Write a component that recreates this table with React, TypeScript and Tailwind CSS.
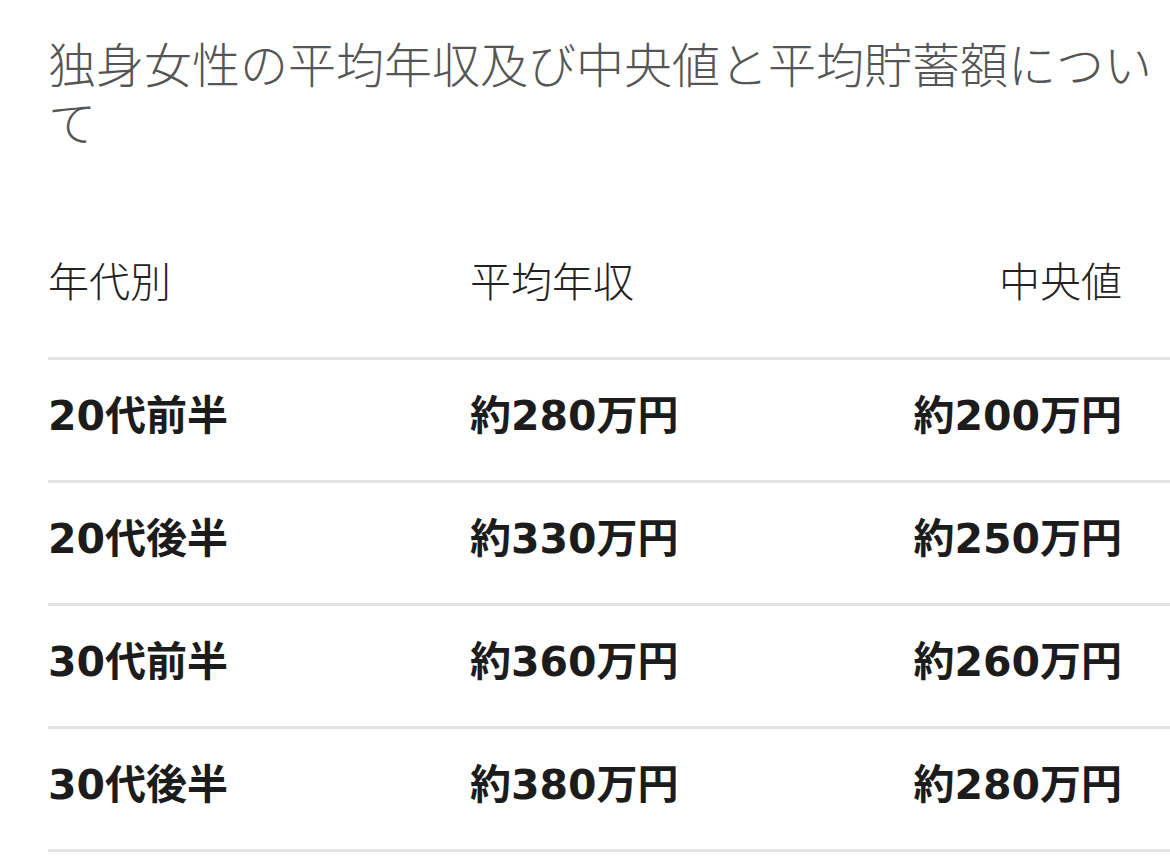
const rows = [
  { age: "20代前半", avg: "約280万円", median: "約200万円" },
  { age: "20代後半", avg: "約330万円", median: "約250万円" },
  { age: "30代前半", avg: "約360万円", median: "約260万円" },
  { age: "30代後半", avg: "約380万円", median: "約280万円" },
];

export default function App() {
  return (
    <main
      className="w-[1170px] h-[861px] overflow-hidden bg-white pl-[48px] pt-[34px]"
      style={{ fontFamily: '"Noto Sans CJK JP", "Noto Sans", sans-serif' }}
    >
      <h1 className="text-[48px] leading-[57.6px] font-light text-[#555]">
        独身女性の平均年収及び中央値と平均貯蓄額について
      </h1>

      <div className="mt-[54px]">
        {/* header */}
        <div className="grid grid-cols-[422px_1fr_auto] pt-[52px] pb-[54px] border-b-[3px] border-[#e3e3e3] text-[41px] leading-[48px] font-light text-[#222]">
          <div>年代別</div>
          <div>平均年収</div>
          <div className="pr-[48px] text-right">中央値</div>
        </div>

        {rows.map((r) => (
          <div
            key={r.age}
            className="grid grid-cols-[422px_1fr_auto] items-center h-[123px] pb-[8px] border-b-[3px] border-[#e3e3e3] text-[41px] leading-[48px] font-bold text-[#1c1c1c] font-['DejaVu_Sans','Noto_Sans_CJK_JP',sans-serif]"
          >
            <div>{r.age}</div>
            <div>{r.avg}</div>
            <div className="pr-[48px] text-right">{r.median}</div>
          </div>
        ))}
      </div>
    </main>
  );
}
